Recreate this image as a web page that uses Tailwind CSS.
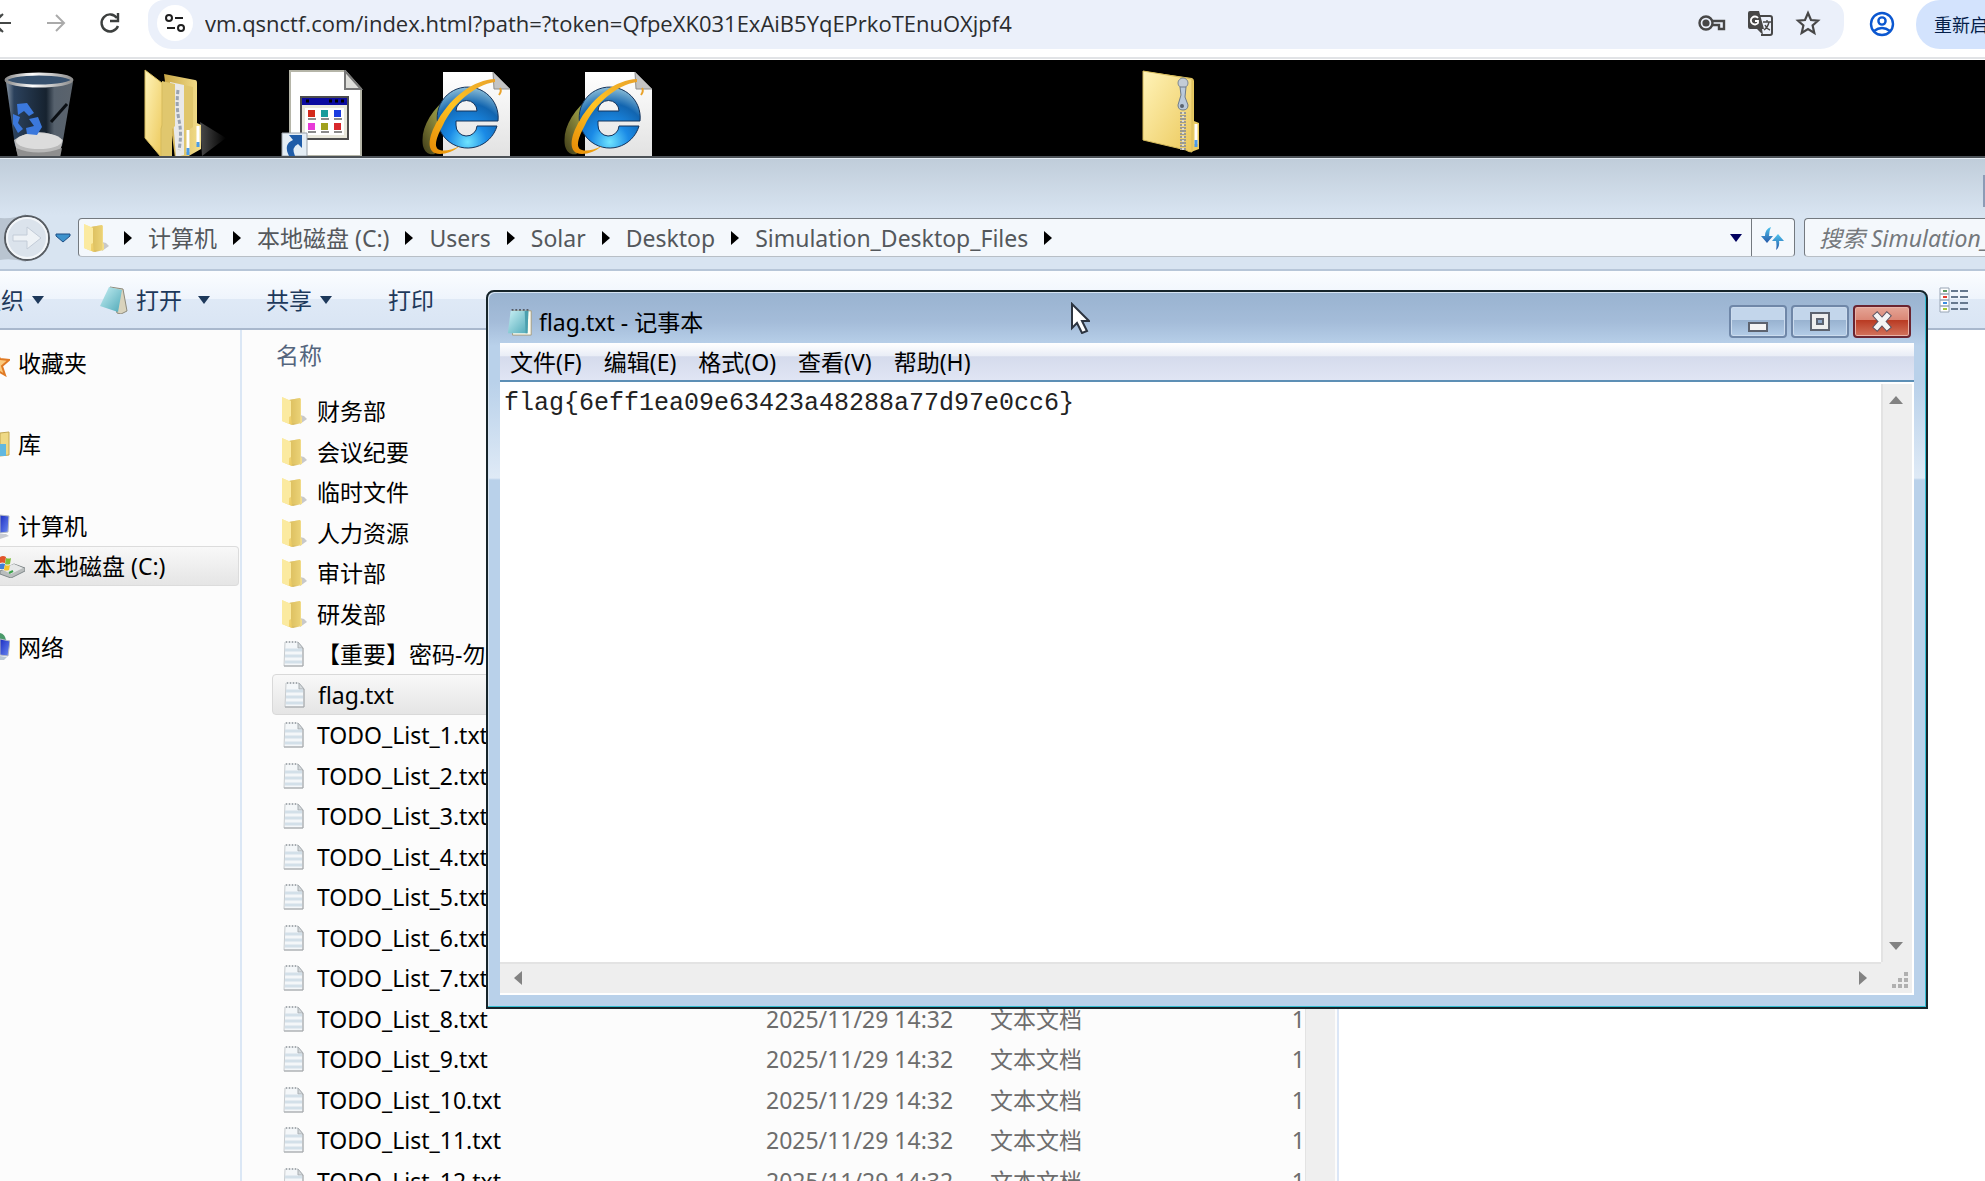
<!DOCTYPE html>
<html lang="zh-CN">
<head>
    <meta charset="UTF-8">
    <meta name="viewport" content="width=device-width, initial-scale=1.0">
    <title>vm.qsnctf.com</title>
    <script src="https://cdn.jsdelivr.net/npm/@tailwindcss/browser@4"></script>
</head>
<body class="relative flex flex-col h-screen overflow-hidden bg-black font-['Noto_Sans','Noto_Sans_CJK_SC',sans-serif] text-[23px] leading-8 text-black">

    <!-- Shared gradients and icons -->
    <svg class="absolute w-0 h-0" aria-hidden="true">
        <defs>
            <linearGradient id="gYellow" x1="0" y1="0" x2="1" y2="1"><stop offset="0" stop-color="#fff3b8"/><stop offset="1" stop-color="#ecc95c"/></linearGradient>
            <linearGradient id="gYellowDark" x1="0" y1="0" x2="1" y2="0"><stop offset="0" stop-color="#c9a747"/><stop offset="1" stop-color="#f5e08e"/></linearGradient>
            <linearGradient id="gTeal" x1="0" y1="0" x2="1" y2="1"><stop offset="0" stop-color="#c8f0f4"/><stop offset="1" stop-color="#4fa9b8"/></linearGradient>
            <linearGradient id="gPage" x1="0" y1="0" x2="0" y2="1"><stop offset="0" stop-color="#ffffff"/><stop offset="1" stop-color="#e2e2e2"/></linearGradient>
            <linearGradient id="gBin" x1="0" y1="0" x2="1" y2="0"><stop offset="0" stop-color="#8a97a5"/><stop offset=".12" stop-color="#2b415c"/><stop offset=".6" stop-color="#16222f"/><stop offset=".72" stop-color="#56616d"/><stop offset="1" stop-color="#5b636c"/></linearGradient>
            <linearGradient id="gRim" x1="0" y1="0" x2="1" y2="0"><stop offset="0" stop-color="#8b8b8b"/><stop offset=".4" stop-color="#ffffff"/><stop offset="1" stop-color="#8e8e8e"/></linearGradient>
            <radialGradient id="gIe" cx=".5" cy=".9" r=".9"><stop offset="0" stop-color="#6fe4ff"/><stop offset=".35" stop-color="#1a8ae6"/><stop offset=".7" stop-color="#1265b0"/><stop offset="1" stop-color="#8fc0d8"/></radialGradient>
            <linearGradient id="gSwoosh" x1="0" y1="1" x2="1" y2="0"><stop offset="0" stop-color="#e58a06"/><stop offset=".5" stop-color="#ffc423"/><stop offset="1" stop-color="#e9a22a"/></linearGradient>
            <linearGradient id="gOlive" x1="0" y1="1" x2="1" y2="0"><stop offset="0" stop-color="#3d3a18"/><stop offset=".5" stop-color="#8c8a3c"/><stop offset="1" stop-color="#9bbf5a"/></linearGradient>
            <linearGradient id="gArrow" x1="0" y1="0" x2="0" y2="1"><stop offset="0" stop-color="#4fc4ee"/><stop offset="1" stop-color="#2558a8"/></linearGradient>
            <linearGradient id="gScreen" x1="0" y1="0" x2="1" y2="1"><stop offset="0" stop-color="#1a2cc0"/><stop offset="1" stop-color="#6d8cf4"/></linearGradient>
            <linearGradient id="gShadow" x1="0" y1="0" x2="1" y2="0"><stop offset="0" stop-color="#4a4a4a"/><stop offset="1" stop-color="#000000"/></linearGradient>
        </defs>
        <symbol id="folder" viewBox="0 0 26 30">
            <path d="M19 28l7-5-3-3-4-1z" fill="#c9c9c9"/>
            <path d="M8 4l11-2 1 1v17l1 1v6l-9 2-3-1z" fill="url(#gYellowDark)"/>
            <path d="M8 4l11-2v24l-9 2z" fill="#e8cd6c" opacity=".6"/>
            <path d="M1 1l9 4v15l1 9-10-4z" fill="url(#gYellow)"/>
            <path d="M1 1l9 4v15l-2 1v7l-7-3z" fill="#fbeaa0"/>
        </symbol>
        <symbol id="textfile" viewBox="0 0 26 28">
            <path d="M4 2h13l5 6v18H3z" fill="#f4f7f9" stroke="#c8cccf"/>
            <path d="M17 2v6h5z" fill="#d5dadd" stroke="#a9aeb2"/>
            <path d="M4 10h17M4 16h17M4 22h17" stroke="#d3e0e9" stroke-width="3"/>
            <path d="M5 2h11" stroke="#a5abb0" stroke-width="2" stroke-dasharray="1 2"/>
            <path d="M22 8v18H3" fill="none" stroke="#a2a5a8"/>
        </symbol>
        <symbol id="notepad" viewBox="0 0 30 32">
            <path d="M7 4h20v26H7z" fill="#fffdf0" stroke="#a39a7b"/>
            <path d="M5 4h19l-1 24H2z" fill="url(#gTeal)"/>
            <path d="M20 4h4l-1 24h-2z" fill="#4ba0ae"/>
            <path d="M6 3h19" stroke="#555b66" stroke-width="2" stroke-dasharray="2 2"/>
        </symbol>
        <symbol id="ie" viewBox="0 0 92 84">
            <path d="M21 0h50l17 17v67H21z" fill="url(#gPage)"/>
            <path d="M71 0l17 17H72z" fill="#c4c4c4" stroke="#8e8e8e"/>
            <path d="M28 24C8 38-2 58 1 74c2 7 6 9 12 8-5-14 4-34 20-55z" fill="url(#gOlive)"/>
            <path d="M76 49A30.500 30.500 0 1 0 75 54H55a10 10 0 0 1-21-1v-4zM34 39a10.500 10.500 0 0 1 21 0z" fill="url(#gIe)" fill-rule="evenodd" stroke="#15345c"/>
            <path d="M73 7C52 8 30 24 16 48 5 66 4 82 18 82q10 0 20-8-13 6-20 4C11 76 14 66 21 53 31 32 52 13 73 10z" fill="url(#gSwoosh)"/>
            <path d="M78 16q2 3-1 7" fill="none" stroke="#e9a22a" stroke-width="2"/>
        </symbol>
        <symbol id="down" viewBox="0 0 12 8"><path d="M0 0h12L6 8z" fill="currentColor"/></symbol>
        <symbol id="crumb" viewBox="0 0 8 14"><path d="M0 0l8 7-8 7z" fill="#000000"/></symbol>
    </svg>

    <!-- Browser toolbar -->
    <header class="shrink-0 h-[60px] bg-white">
        <div class="flex items-start h-[59px] border-b-2 border-[#e1e3e6]">
            <div class="flex items-center h-[46px] w-[148px] shrink-0 text-[#444746]">
                <button type="button" aria-label="后退" class="w-3 h-6"><svg class="w-3 h-6" viewBox="0 0 12 24" fill="none" stroke="#444746" stroke-width="2"><path d="M-8 12h19M0 3l-9 9 9 9M3 3l-9 9 9 9"/></svg></button>
                <button type="button" aria-label="前进" class="ml-8"><svg class="w-6 h-6" viewBox="0 0 24 24" fill="none" stroke="#aaaaaa" stroke-width="2"><path d="M3 12h17M12 4l8 8-8 8"/></svg></button>
                <button type="button" aria-label="重新加载" class="ml-[30px]"><svg class="w-6 h-6" viewBox="0 0 24 24" fill="none" stroke="#3c3f3e" stroke-width="2.4"><path d="M19 7a8.500 8.500 0 1 0 1 8"/><path d="M20 2v8h-8"/></svg></button>
            </div>
            <div class="flex items-center flex-1 h-[49px] pb-[3px] pl-[9px] pr-[22px] rounded-b-3xl rounded-t-2xl bg-[#ebf0fa]">
                <button type="button" aria-label="查看网站信息" class="flex items-center justify-center w-9 h-9 rounded-full bg-white">
                    <svg class="w-5 h-5" viewBox="0 0 20 20" fill="none" stroke="#1f1f1f" stroke-width="2"><circle cx="4" cy="5" r="3"/><path d="M10 5h8M2 15h8"/><circle cx="16" cy="15" r="3"/></svg>
                </button>
                <input type="text" aria-label="地址" value="vm.qsnctf.com/index.html?path=?token=QfpeXK031ExAiB5YqEPrkoTEnuOXjpf4" class="flex-1 ml-3 font-['Open_Sans',sans-serif] text-[22px] text-[#2a2c2e] bg-transparent outline-none">
                <div class="flex items-center gap-5">
                    <button type="button" aria-label="密码"><svg class="w-7 h-7" viewBox="0 0 28 28" fill="none" stroke="#474747" stroke-width="2.4"><circle cx="8" cy="14" r="6.500"/><circle cx="8" cy="14" r="2.400" fill="#474747"/><path d="M14 12h12v8h-5v-4h-7"/></svg></button>
                    <button type="button" aria-label="翻译此页"><svg class="w-7 h-7" viewBox="0 0 28 28"><path d="M13 7h11q2 0 2 2v15q0 2-2 2h-9" fill="none" stroke="#474747" stroke-width="2"/><path d="M2 4q0-2 2-2h9l5 18h-2l1 6-6-6H4q-2 0-2-2z" fill="#474747"/><path d="M12 9a4 4 0 1 0 0 5v-2H9" fill="none" stroke="#ffffff" stroke-width="1.800"/><path d="M17 13h8M21 11v2M23 13q-1 5-5 8M19 16q2 4 5 5" fill="none" stroke="#474747" stroke-width="1.400"/></svg></button>
                    <button type="button" aria-label="收藏"><svg class="w-7 h-7" viewBox="0 0 28 28" fill="none" stroke="#474747" stroke-width="2.200"><path d="M14 4l3 7 7 .7-5.400 4.800L20.300 24 14 20l-6.300 4 1.700-7.500L4 11.700l7-.7z"/></svg></button>
                </div>
            </div>
            <div class="flex items-start justify-between w-[141px] h-[49px] pl-6 shrink-0">
                <button type="button" aria-label="个人资料" class="flex items-center h-[47px]"><svg class="w-7 h-7" viewBox="0 0 28 28" fill="none" stroke="#0b57d0" stroke-width="2.400"><circle cx="14" cy="14" r="11"/><circle cx="14" cy="11" r="3.600"/><path d="M6 21q8-6 16 0"/></svg></button>
                <button type="button" class="w-[69px] h-[49px] pl-[18px] overflow-hidden text-left whitespace-nowrap text-[18px] text-[#041e49] bg-[#d3e3fd] rounded-l-3xl">重新启动</button>
            </div>
        </div>
    </header>

    <!-- Desktop icons -->
    <section class="relative shrink-0 h-24 overflow-hidden bg-black">
        <svg class="absolute left-[3px] top-3 w-[72px] h-[86px]" viewBox="0 0 72 86" role="img" aria-label="回收站">
            <path d="M3 10l9 64q24 14 47 0L70 10z" fill="url(#gBin)"/>
            <path d="M48 50L64 32" stroke="#0b0f14" stroke-width="3"/>
            <path d="M11 68q24-16 49 0l-3 12q-21 10-43 0z" fill="#b9b9b9"/>
            <ellipse cx="36" cy="69" rx="23" ry="8" fill="#dcdcdc"/>
            <path d="M13 76q22 9 46 0l-2 10H15z" fill="#8f8f8f"/>
            <ellipse cx="36" cy="8" rx="33" ry="6" fill="#37516e" stroke="url(#gRim)" stroke-width="3"/>
            <path d="M14 32l10-1 7 10-5 3-5-5-6 4zM10 42l7 3-2 6 5 6-5 4-5-9zM24 62l-1-6 8-2-5-7 9-2 4 10-5 8z" fill="#3b78dc"/>
        </svg>
        <svg class="absolute left-36 top-2 w-[84px] h-[90px]" viewBox="0 0 84 90" role="img" aria-label="文件夹">
            <path d="M56 54l26 16-24 18z" fill="url(#gShadow)"/>
            <path d="M20 6l31 6q2 0 2 3v40l4 2v24l-14 8-12 1z" fill="url(#gYellowDark)"/>
            <path d="M26 14l14 3v70l-8 2z" fill="#e9e9e9"/>
            <path d="M34 22q-2 16 1 30t0 30" fill="none" stroke="#9aa3b0" stroke-width="3" stroke-dasharray="4 2"/>
            <path d="M40 17l9 2v40l-3 2v22l-6 5z" fill="#e0c66c"/>
            <path d="M18 13l13 3v42l-3 3v29H16z" fill="#e0c76e"/>
            <path d="M44 62v22M54 58v18" stroke="#ffffff" stroke-width="3"/>
            <path d="M44 80v7M54 74v5" stroke="#4a9be8" stroke-width="3"/>
            <path d="M1 2l17 13v42l-1 4v28L1 70z" fill="url(#gYellow)" stroke="#d6bb5c"/>
        </svg>
        <svg class="absolute left-[281px] top-2.5 w-[82px] h-[86px]" viewBox="0 0 82 86" role="img" aria-label="程序快捷方式">
            <path d="M9 1h55l16 18v67H9z" fill="#ffffff" stroke="#b5b5a8" stroke-width="2"/>
            <path d="M64 1l16 18H64z" fill="#dededa" stroke="#777777" stroke-width="2"/>
            <path d="M20 27h47v42H20z" fill="#e9e8dc" stroke="#4c4c4c" stroke-width="2"/>
            <path d="M21 28h45v7H21z" fill="#0a0aa0"/>
            <path d="M25 31h3M48 31h3M54 31h3M60 31h3" stroke="#000000" stroke-width="3"/>
            <path d="M24 38h39v27H24z" fill="#ffffff"/>
            <path d="M27 40h7v7h-7z" fill="#d32a1c"/><path d="M40 40h7v7h-7z" fill="#1a9c9c"/><path d="M53 40h7v7h-7z" fill="#1a3ce0"/>
            <path d="M27 53h7v7h-7z" fill="#e83ad8"/><path d="M40 53h7v7h-7z" fill="#a0a01c"/><path d="M53 53h7v7h-7z" fill="#d8282c"/>
            <path d="M27 49h8M40 49h8M53 49h8M27 62h8M40 62h8M53 62h8" stroke="#8b8b8b" stroke-width="2"/>
            <path d="M1 63h25v23H1z" fill="#e4edf5" stroke="#9aa2aa"/>
            <path d="M8 86Q2 74 12 70l-4-5h13v13l-4-4q-7 3-3 12z" fill="#1f5ca8"/>
        </svg>
        <svg class="absolute left-[422px] top-3 w-[92px] h-[84px]" role="img" aria-label="Internet Explorer"><use href="#ie"/></svg>
        <svg class="absolute left-[564px] top-3 w-[92px] h-[84px]" role="img" aria-label="Internet Explorer"><use href="#ie"/></svg>
        <svg class="absolute left-[1142px] top-2.5 w-[58px] h-[84px]" viewBox="0 0 58 84" role="img" aria-label="压缩文件">
            <path d="M1 1l49 7q2 1 2 3v40l5 2v26l-8 3z" fill="#e8ca62"/>
            <path d="M1 1l49 8v73q-4 0-6-2L1 70z" fill="url(#gYellow)" stroke="#d6bb5c"/>
            <path d="M54 54v20" stroke="#ffffff" stroke-width="3"/><path d="M54 70v7" stroke="#4a9be8" stroke-width="3"/>
            <path d="M41 42v39" stroke="#9c9a90" stroke-width="6" stroke-dasharray="2 1"/>
            <path d="M41 42v39" stroke="#dedbd0" stroke-width="2" stroke-dasharray="2 2"/>
            <circle cx="41" cy="13" r="5" fill="#c3ccd6" stroke="#7d8894"/>
            <path d="M38 17h6l-1 10 3 8q0 5-5 5t-5-5l3-10z" fill="#b9c9db" stroke="#6e7b8a"/>
            <circle cx="40" cy="36" r="2" fill="#59636e"/>
        </svg>
    </section>

    <!-- Explorer window -->
    <section class="flex flex-col flex-1 min-h-0 border-t-2 border-[#4c5258] bg-[#d8e4f1]">
        <div class="shrink-0 flex justify-end items-start h-[57px] pt-4 border-t border-[#e4ecf4] bg-linear-to-b from-[#c0cdda] to-[#d8e4f1]">
            <div class="w-0.5 h-8 bg-[#8c9bb5]"></div>
        </div>
        <nav class="shrink-0 flex items-center h-14 pb-[9px] border-b-2 border-[#b7c6d8]">
            <button type="button" aria-label="前进" class="shrink-0 w-[50px] h-[50px]">
                <svg class="w-[50px] h-[50px]" viewBox="0 0 50 50"><path d="M0 5Q14 6 26 1v48Q12 45 0 47z" fill="#b9c4d0"/><circle cx="27" cy="25" r="22" fill="#dbe3ec" stroke="#575c62" stroke-width="2"/><circle cx="27" cy="25" r="20" fill="none" stroke="#f3f6f9" stroke-width="2"/><path d="M13 22h14v-8l14 11-14 11v-8H13z" fill="#eef2f6" stroke="#c3ccd8"/></svg>
            </button>
            <button type="button" aria-label="最近的页面" class="ml-[5px]"><svg class="w-4 h-2.5" viewBox="0 0 16 10"><path d="M1 1h14v2L8 9 1 3z" fill="#3d92cc" stroke="#1f4f85"/></svg></button>
            <div class="flex flex-1 items-center h-[39px] ml-[7px] border border-[#73797f] border-b-[#b8bfc6] rounded-sm bg-[#f4f8fc] text-[#54585c]">
                <svg class="w-[26px] h-[30px] ml-1 mr-[15px]"><use href="#folder"/></svg>
                <div class="flex flex-1 items-center gap-4">
                    <svg class="w-2 h-3.5"><use href="#crumb"/></svg>
                    <a href="#">计算机</a>
                    <svg class="w-2 h-3.5"><use href="#crumb"/></svg>
                    <a href="#">本地磁盘 (C:)</a>
                    <svg class="w-2 h-3.5"><use href="#crumb"/></svg>
                    <a href="#">Users</a>
                    <svg class="w-2 h-3.5"><use href="#crumb"/></svg>
                    <a href="#">Solar</a>
                    <svg class="w-2 h-3.5"><use href="#crumb"/></svg>
                    <a href="#">Desktop</a>
                    <svg class="w-2 h-3.5"><use href="#crumb"/></svg>
                    <a href="#">Simulation_Desktop_Files</a>
                    <svg class="w-2 h-3.5"><use href="#crumb"/></svg>
                </div>
                <button type="button" aria-label="以前的位置" class="px-2 text-[#00005f]"><svg class="w-3.5 h-2"><use href="#down"/></svg></button>
                <button type="button" aria-label="刷新" class="flex items-center justify-center w-[43px] h-full border-l border-[#73797f]">
                    <svg class="w-7 h-7" viewBox="0 0 28 28" fill="url(#gArrow)"><path d="M12 3Q6 5 6 12H2l6 7 6-7h-4q0-5 2-9z"/><path d="M17 26q4-3 3-9h5l-6-7-6 7h4q1 5 0 9z"/></svg>
                </button>
            </div>
            <input type="text" aria-label="搜索" placeholder="搜索 Simulation_Desktop_Files" class="w-[181px] h-[39px] ml-[9px] pl-3.5 border border-r-0 border-[#73797f] border-b-[#b8bfc6] rounded-l-sm bg-[#f4f8fc] italic placeholder:text-[#74787c]">
        </nav>
        <div class="shrink-0 flex items-center h-[59px] border-b-2 border-[#a9b8cd] bg-[linear-gradient(#fbfdff,#eef4fc_50%,#dfe9f6_50%,#d9e5f4)] text-[#1e395b]">
            <button type="button" class="flex items-center gap-2 -ml-[22px]">组织<svg class="w-3 h-2"><use href="#down"/></svg></button>
            <button type="button" class="flex items-center gap-2 ml-14">
                <svg class="w-7 h-7" viewBox="0 0 28 28"><path d="M10 1l13 2 4 22-6 3-4-1z" fill="#d9d3bd" stroke="#8d8a7c"/><path d="M9 1l13 3-4 22L0 20z" fill="url(#gTeal)"/></svg>
                打开<svg class="w-3 h-2 ml-2"><use href="#down"/></svg>
            </button>
            <button type="button" class="flex items-center gap-2 ml-14">共享<svg class="w-3 h-2"><use href="#down"/></svg></button>
            <button type="button" class="ml-14">打印</button>
            <button type="button" aria-label="更改您的视图" class="ml-auto mr-4">
                <svg class="w-[30px] h-[26px]" viewBox="0 0 30 26"><path d="M1 1h9v6H1zM1 7h9v6H1zM1 13h9v6H1zM1 19h9v6H1z" fill="#ffffff" stroke="#98a5b5"/><path d="M4 4h4" stroke="#5d9b63" stroke-width="2"/><path d="M4 10h4" stroke="#e33a2c" stroke-width="2"/><path d="M4 16h4" stroke="#3c8ee0" stroke-width="2"/><path d="M4 22h4" stroke="#a4c936" stroke-width="2"/><path d="M12 4h7M21 4h8M12 10h7M21 10h8M12 16h7M21 16h8M12 22h7M21 22h8" stroke="#66788e" stroke-width="2"/></svg>
            </button>
        </div>

        <div class="flex flex-1 min-h-0 bg-[#fcfcfc]">
            <aside class="flex flex-col shrink-0 w-[242px] pt-[13px] border-r-2 border-[#dbe7f5]">
                <a href="#" class="flex items-center h-10 gap-2 mb-[41px]"><svg class="w-2.5 h-7" viewBox="18 0 10 28"><path d="M14 2l4 8 9 1-7 6 3 9-9-5z" fill="#fbc97c" stroke="#e07a24" stroke-width="2"/></svg>收藏夹</a>
                <a href="#" class="flex items-center h-10 gap-2 mb-[41px]"><svg class="w-2.5 h-7" viewBox="0 0 10 28"><path d="M0 3l9-1v23l-9 1z" fill="#efd985" stroke="#c2a653"/><path d="M-2 14h8v12h-8z" fill="#62b8e0"/></svg>库</a>
                <a href="#" class="flex items-center h-[41px] gap-2"><svg class="w-2.5 h-7" viewBox="0 0 10 28"><path d="M0 3l9 1-1 16-8 1z" fill="url(#gScreen)" stroke="#b4bac4"/><path d="M0 22h6l3 2-9 3z" fill="#c9ccd2"/></svg>计算机</a>
                <a href="#" class="flex items-center h-10 gap-2 mr-px border border-l-0 border-[#dcdcdc] rounded-r-sm bg-linear-to-b from-[#f8f8f8] to-[#e5e5e5]">
                    <svg class="w-[25px] h-6" viewBox="0 0 25 24"><path d="M0 17l14-7 11 4v3l-14 7-11-4z" fill="#b9bdbd" stroke="#80888a"/><path d="M1 15l13-5 9 4-12 6z" fill="#e6e8e8"/><path d="M0 3q3-2 6 0l-1 6q-3-1-5 0z" fill="#e2562c"/><path d="M6 4q3 1 5 0l-1 6q-3 1-5 0z" fill="#7fbf3a"/><path d="M0 10q3-1 5 0l-1 5H0z" fill="#3e7fd8"/><path d="M5 11q3 1 5 0l-1 5q-3 1-5 0z" fill="#f4c32c"/><path d="M9 19l4-2" stroke="#3aa04a" stroke-width="2"/></svg>
                    本地磁盘 (C:)
                </a>
                <a href="#" class="flex items-center h-10 gap-2 mt-[41px]"><svg class="w-2.5 h-7" viewBox="0 0 10 28"><path d="M0 0q5 1 6 7H0z" fill="#4a9a6a"/><path d="M0 6l10 2-2 15-8-1z" fill="url(#gScreen)" stroke="#b4bac4"/><path d="M0 23l7 1-3 3H0z" fill="#b9c8d4"/></svg>网络</a>
            </aside>
            <div class="flex-1 min-w-0 pl-[30px] overflow-hidden">
                <table class="w-full table-fixed border-separate border-spacing-0 text-left whitespace-nowrap">
                    <thead>
                        <tr class="h-[61px] text-[#54657d]">
                            <th class="pl-1 pb-3 font-normal">名称</th>
                            <th class="w-[224px] pb-3 font-normal">修改日期</th>
                            <th class="w-[225px] pb-3 font-normal">类型</th>
                            <th class="w-[90px] pb-3 font-normal text-right">大小</th>
                        </tr>
                    </thead>
                    <tbody id="files"></tbody>
                </table>
            </div>
            <div class="shrink-0 w-[30px] border-l border-[#e3e3e3] bg-[#efefef]"></div>
            <div class="shrink-0 w-[648px] ml-0.5 border-l-2 border-[#dbe6f6] bg-white"></div>
        </div>
    </section>

    <!-- Notepad window -->
    <section class="absolute top-[290px] right-[57px] bottom-[172px] left-[486px] flex flex-col pl-3 pr-3 pb-3 border-2 border-[#16242a] rounded-t-lg bg-[linear-gradient(#99b3d0_0,#a4bcd9_30px,#b9d1ea_54px,#b9d1ea_90px,#dfeaf6_186px,#b9d1ea_188px)] shadow-[inset_-1px_-1px_0_#35bdd2,inset_1px_1px_0_#d6e4f2]">
        <div class="shrink-0 flex items-center h-[51px] pt-2">
            <svg class="w-7 h-8 ml-1.5 mr-[5px]"><use href="#notepad"/></svg>
            <h1 class="flex-1">flag.txt - 记事本</h1>
            <div class="flex gap-1 mr-[3px]">
                <button type="button" aria-label="最小化" class="flex justify-center w-[58px] h-[33px] border-2 border-[#6f87a8] rounded-sm bg-[linear-gradient(#c3d6eb_45%,#98b2d0_45%,#b4cde8)] shadow-[inset_0_0_0_1px_#ccdcee]"><svg class="w-7 h-7" viewBox="0 0 28 28"><path d="M5 16h18v8H5z" fill="#f5f5f5" stroke="#5d636f" stroke-width="2"/></svg></button>
                <button type="button" aria-label="最大化" class="flex justify-center w-[58px] h-[33px] border-2 border-[#6f87a8] rounded-sm bg-[linear-gradient(#c3d6eb_45%,#98b2d0_45%,#b4cde8)] shadow-[inset_0_0_0_1px_#ccdcee]"><svg class="w-7 h-7" viewBox="0 0 28 28"><path d="M5 6h18v17H5z" fill="#eeeeee" stroke="#5d636f" stroke-width="2"/><path d="M11 12h6v5h-6z" fill="#8da7c8" stroke="#5d636f" stroke-width="2"/></svg></button>
                <button type="button" aria-label="关闭" class="flex justify-center w-[58px] h-[33px] border-2 border-[#6b2430] rounded-sm bg-[linear-gradient(#e5a596_0,#da8675_45%,#b93a22_45%,#d3735c)] shadow-[inset_0_0_0_1px_#e9b3a8]"><svg class="w-7 h-7" viewBox="0 0 28 28" fill="none" stroke-linecap="square"><path d="M9 9l10 11M19 9L9 20" stroke="#5d5462" stroke-width="7"/><path d="M9 9l10 11M19 9L9 20" stroke="#f4f4f4" stroke-width="5"/></svg></button>
            </div>
        </div>
        <div class="shrink-0 flex items-center gap-[22px] h-[37px] pl-2.5 bg-[linear-gradient(#ffffff,#e9edf6_35%,#d5dbec_37%,#e0e5f4)]">
            <button type="button">文件(F)</button>
            <button type="button">编辑(E)</button>
            <button type="button">格式(O)</button>
            <button type="button">查看(V)</button>
            <button type="button">帮助(H)</button>
        </div>
        <div class="flex flex-col flex-1 min-h-0 border-t-2 border-[#5d8fb5] bg-white">
            <div class="flex flex-1 min-h-0">
                <textarea aria-label="文本内容" wrap="off" spellcheck="false" class="flex-1 pl-1 pt-1.5 resize-none overflow-hidden outline-none font-['Liberation_Mono',monospace] text-[25px] leading-8 text-[#222222]">flag{6eff1ea09e63423a48288a77d97e0cc6}</textarea>
                <div class="flex flex-col justify-between items-center w-[31px] mr-0.5 mt-0.5 py-3 pr-1 border-l-2 border-[#e3e3e3] bg-[#eeeeee]">
                    <svg class="w-3.5 h-2" viewBox="0 0 14 8"><path d="M7 0l7 8H0z" fill="#828282"/></svg>
                    <svg class="w-3.5 h-2" viewBox="0 0 14 8"><path d="M0 0h14L7 8z" fill="#828282"/></svg>
                </div>
            </div>
            <div class="flex shrink-0 h-[31px] mb-0.5 mr-0.5 bg-[#eeeeee]">
                <div class="flex flex-1 justify-between items-center px-3.5 pb-0.5 border-t-2 border-[#e3e3e3]">
                    <svg class="w-2 h-3.5" viewBox="0 0 8 14"><path d="M8 0v14L0 7z" fill="#828282"/></svg>
                    <svg class="w-2 h-3.5" viewBox="0 0 8 14"><path d="M0 0l8 7-8 7z" fill="#828282"/></svg>
                </div>
                <div class="flex items-end justify-end w-[31px] p-1">
                    <svg class="w-[18px] h-[18px]" viewBox="0 0 18 18" fill="#b0b0b0"><path d="M14 1h4v4h-4zM14 7h4v4h-4zM14 13h4v4h-4zM8 7h4v4H8zM8 13h4v4H8zM2 13h4v4H2z"/></svg>
                </div>
            </div>
        </div>
    </section>

    <!-- Mouse pointer -->
    <svg class="absolute left-[1070px] top-[302px] w-5 h-8" viewBox="0 0 20 32"><path d="M2 2v24l5-5 5 10 5-2-5-10h7z" fill="#ffffff" stroke="#2c3440" stroke-width="2"/></svg>

    <script>
        const folders = ['财务部', '会议纪要', '临时文件', '人力资源', '审计部', '研发部'];
        const files = ['【重要】密码-勿删.txt', 'flag.txt'];
        for (let i = 1; i <= 12; i++) files.push(`TODO_List_${i}.txt`);

        const row = (name, icon, size) => {
            const selected = name === 'flag.txt' ? 'border border-[#d9d9d9] rounded-l-sm bg-linear-to-b from-[#f8f8f8] to-[#e5e5e5]' : '';
            const isFile = icon === 'textfile';
            return `
                <tr class="odd:h-[40px] even:h-[41px] text-[#6d6d6d]">
                    <td class="pl-[9px] py-0 text-black ${selected}">
                        <div class="flex items-center gap-2.5">
                            <svg class="${size}"><use href="#${icon}"/></svg>${name}
                        </div>
                    </td>
                    <td class="p-0">2025/11/29 14:32</td>
                    <td class="p-0">${isFile ? '文本文档' : '文件夹'}</td>
                    <td class="p-0 text-right">${isFile ? '1' : ''}</td>
                </tr>`;
        };

        document.getElementById('files').innerHTML =
            folders.map(name => row(name, 'folder', 'w-[26px] h-[30px]')).join('') +
            files.map(name => row(name, 'textfile', 'w-[26px] h-7')).join('');
    </script>
</body>
</html>
